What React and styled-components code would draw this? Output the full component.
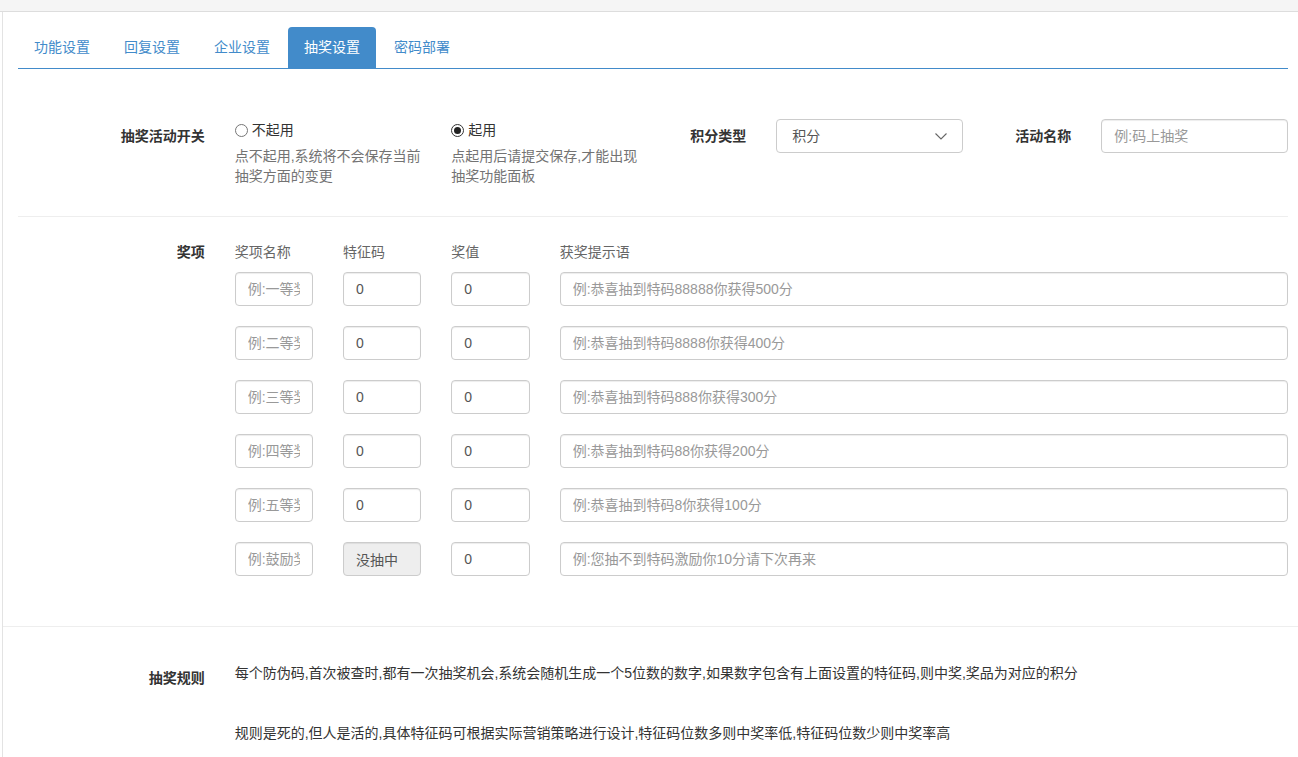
import React from "react";
import styled, { createGlobalStyle } from "styled-components";

const GlobalStyle = createGlobalStyle`
  html, body {
    margin: 0;
    padding: 0;
    background: #fff;
    overflow: hidden;
  }
  body {
    font-family: "Liberation Sans", "Noto Sans CJK SC", sans-serif;
    font-size: 14px;
    line-height: 20px;
    color: #333;
  }
  * {
    box-sizing: border-box;
  }
`;

const TopStrip = styled.div`
  height: 12px;
  background: #f5f5f5;
  border-bottom: 1px solid #ddd;
`;

const Panel = styled.div`
  width: 1301px;
  margin-left: 2px;
  border-left: 1px solid #e3e3e3;
  padding-top: 15px;
  min-height: 745px;
`;

const Tabs = styled.ul`
  display: flex;
  list-style: none;
  margin: 0 15px;
  padding: 0;
  border-bottom: 1px solid #428bca;
`;

const Tab = styled.li`
  height: 41px;
  margin-right: 2px;
  padding: 10px 15px;
  border: 1px solid transparent;
  border-radius: 4px 4px 0 0;
  font-size: 14px;
  line-height: 19px;
  color: ${(p) => (p.$active ? "#fff" : "#428bca")};
  background: ${(p) => (p.$active ? "#428bca" : "transparent")};
  cursor: pointer;
`;

const Grid = styled.div`
  display: grid;
  grid-template-columns: repeat(12, 108.333px);
  width: 1301px;
  margin-top: ${(p) => p.$top || 0}px;
`;

const Cell = styled.div`
  grid-column: ${(p) => p.$col} / span ${(p) => p.$span || 1};
  padding: 0 15px;
`;

const Label = styled(Cell)`
  padding-top: 7px;
  text-align: right;
  font-weight: bold;
  color: #333;
`;

const RadioLine = styled.label`
  display: flex;
  align-items: center;
  height: 20px;
  margin-top: 1px;
  color: #333;
`;

const RadioDot = styled.span`
  width: 13px;
  height: 13px;
  margin-right: 4px;
  border-radius: 50%;
  border: 1px solid ${(p) => (p.$on ? "#333" : "#767676")};
  background: #fff;
  display: flex;
  align-items: center;
  justify-content: center;
  &::after {
    content: "";
    width: 7px;
    height: 7px;
    border-radius: 50%;
    background: ${(p) => (p.$on ? "#222" : "transparent")};
  }
`;

const Help = styled.div`
  margin-top: 6px;
  color: #737373;
`;

const Input = styled.input`
  display: block;
  width: 100%;
  height: 34px;
  padding: 6px 12px;
  font: inherit;
  color: #555;
  background: ${(p) => (p.disabled ? "#eee" : "#fff")};
  border: 1px solid #ccc;
  border-radius: 4px;
  box-shadow: inset 0 1px 1px rgba(0, 0, 0, 0.075);
  outline: none;
  &::placeholder {
    color: #999;
  }
  &:disabled {
    color: #555;
    opacity: 1;
  }
`;

const SelectBox = styled.div`
  display: flex;
  align-items: center;
  justify-content: space-between;
  height: 34px;
  padding: 0 15px 0 15px;
  border: 1px solid #ccc;
  border-radius: 4px;
  color: #555;
  background: #fff;
`;

const Head = styled(Cell)`
  padding-top: 7px;
  color: #666;
`;

const Divider = styled.hr`
  border: 0;
  border-top: 1px solid #eee;
  margin: ${(p) => p.$top}px ${(p) => (p.$full ? 0 : 15)}px ${(p) => p.$bottom}px;
`;

const RuleText = styled.p`
  margin: 2px 0 40px;
  color: #333;
  white-space: nowrap;
  &:last-child {
    margin-bottom: 0;
  }
`;

const Chevron = () => (
  <svg width="12" height="7" viewBox="0 0 12 7">
    <path d="M0.5 0.5 L6 6 L11.5 0.5" fill="none" stroke="#666" strokeWidth="1.1" />
  </svg>
);

const tabs = ["功能设置", "回复设置", "企业设置", "抽奖设置", "密码部署"];

const prizes = [
  { name: "例:一等奖", tip: "例:恭喜抽到特码88888你获得500分" },
  { name: "例:二等奖", tip: "例:恭喜抽到特码8888你获得400分" },
  { name: "例:三等奖", tip: "例:恭喜抽到特码888你获得300分" },
  { name: "例:四等奖", tip: "例:恭喜抽到特码88你获得200分" },
  { name: "例:五等奖", tip: "例:恭喜抽到特码8你获得100分" },
  { name: "例:鼓励奖", tip: "例:您抽不到特码激励你10分请下次再来", miss: true },
];

const App = () => {
  return (
    <>
      <GlobalStyle />
      <TopStrip />
      <Panel>
        <Tabs>
          {tabs.map((t) => (
            <Tab key={t} $active={t === "抽奖设置"}>
              {t}
            </Tab>
          ))}
        </Tabs>

        <Grid $top={50}>
          <Label $col={1} $span={2}>抽奖活动开关</Label>
          <Cell $col={3} $span={2}>
            <RadioLine>
              <RadioDot />
              不起用
            </RadioLine>
            <Help>
              点不起用,系统将不会保存当前
              <br />
              抽奖方面的变更
            </Help>
          </Cell>
          <Cell $col={5} $span={2}>
            <RadioLine>
              <RadioDot $on />
              起用
            </RadioLine>
            <Help>
              点起用后请提交保存,才能出现
              <br />
              抽奖功能面板
            </Help>
          </Cell>
          <Label $col={7}>积分类型</Label>
          <Cell $col={8} $span={2}>
            <SelectBox>
              <span>积分</span>
              <Chevron />
            </SelectBox>
          </Cell>
          <Label $col={10}>活动名称</Label>
          <Cell $col={11} $span={2}>
            <Input placeholder="例:码上抽奖" />
          </Cell>
        </Grid>

        <Divider $top={30} $bottom={18} />

        <Grid>
          <Label $col={1} $span={2}>奖项</Label>
          <Head $col={3}>奖项名称</Head>
          <Head $col={4}>特征码</Head>
          <Head $col={5}>奖值</Head>
          <Head $col={6} $span={7}>获奖提示语</Head>
        </Grid>
        {prizes.map((p, i) => (
          <Grid key={p.name} $top={i === 0 ? 10 : 20}>
            <Cell $col={3}>
              <Input placeholder={p.name} />
            </Cell>
            <Cell $col={4}>
              {p.miss ? <Input value="没抽中" disabled readOnly /> : <Input defaultValue="0" />}
            </Cell>
            <Cell $col={5}>
              <Input defaultValue="0" />
            </Cell>
            <Cell $col={6} $span={7}>
              <Input placeholder={p.tip} />
            </Cell>
          </Grid>
        ))}

        <Divider $full $top={50} $bottom={34} />

        <Grid>
          <Label $col={1} $span={2}>抽奖规则</Label>
          <Cell $col={3} $span={10}>
            <RuleText>
              每个防伪码,首次被查时,都有一次抽奖机会,系统会随机生成一个5位数的数字,如果数字包含有上面设置的特征码,则中奖,奖品为对应的积分
            </RuleText>
            <RuleText>
              规则是死的,但人是活的,具体特征码可根据实际营销策略进行设计,特征码位数多则中奖率低,特征码位数少则中奖率高
            </RuleText>
          </Cell>
        </Grid>
      </Panel>
    </>
  );
};

export default App;
